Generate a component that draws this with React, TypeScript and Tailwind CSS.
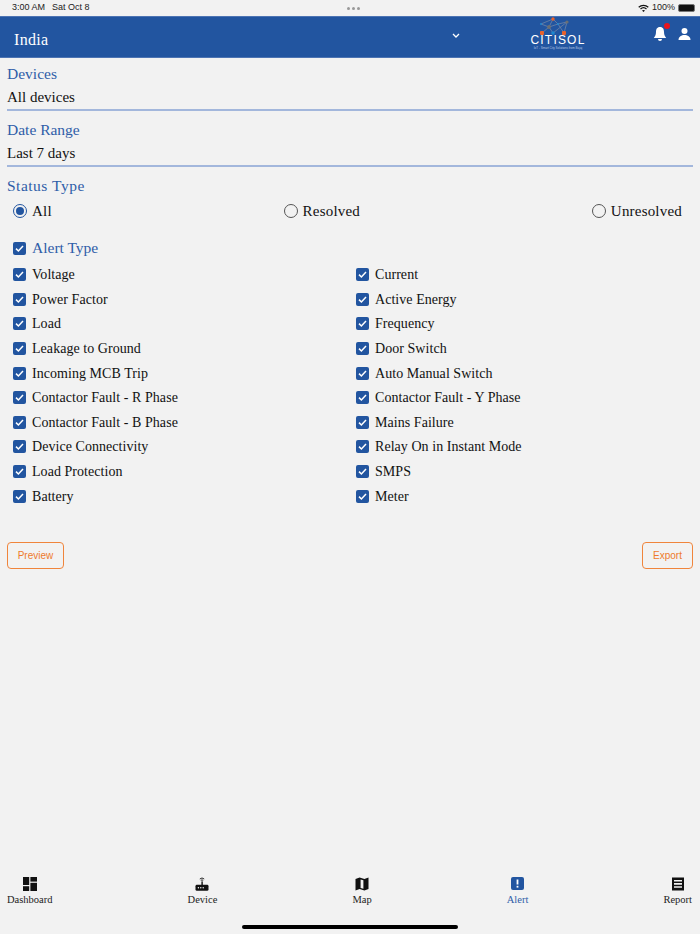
const leftAlerts = ["Voltage", "Power Factor", "Load", "Leakage to Ground", "Incoming MCB Trip", "Contactor Fault - R Phase", "Contactor Fault - B Phase", "Device Connectivity", "Load Protection", "Battery"];
const rightAlerts = ["Current", "Active Energy", "Frequency", "Door Switch", "Auto Manual Switch", "Contactor Fault - Y Phase", "Mains Failure", "Relay On in Instant Mode", "SMPS", "Meter"];

const serif = "font-['Liberation_Serif',serif]";

const Check = () => (
	<span className="w-[13px] h-[13px] rounded-[2px] bg-[#2255a0] flex items-center justify-center shrink-0">
		<svg width="11" height="11" viewBox="0 0 11 11" fill="none">
			<path d="M2 5.6 L4.4 8 L9 3" stroke="#fff" strokeWidth="1.5" />
		</svg>
	</span>
);

const Radio = ({ on, label }: { on?: boolean; label: string }) => (
	<div className="flex items-center gap-[5px]">
		<span className={`w-[14px] h-[14px] rounded-full flex items-center justify-center ${on ? "border-[1.5px] border-[#2255a0]" : "border border-[#555]"}`}>
			{on && <span className="w-[8px] h-[8px] rounded-full bg-[#2255a0]" />}
		</span>
		<span className="text-[15px] text-[#111] tracking-[0.2px]">{label}</span>
	</div>
);

const Field = ({ label, value }: { label: string; value: string }) => (
	<div className="border-b-2 border-[#a3b7dc] h-[56px] pt-[9px]">
		<div className="text-[15.5px] leading-[20px] text-[#2f5da8]">{label}</div>
		<div className="text-[15px] leading-[20px] mt-[3px] text-[#111]">{value}</div>
	</div>
);

const Logo = () => (
	<div className="w-[60px] h-[40px] flex flex-col items-center">
		<svg width="40" height="19" viewBox="0 0 40 19">
			<g stroke="#8a93a8" strokeWidth="0.6" fill="none">
				<path d="M3 7 L15 2 L20 7 L11 10 L3 7" />
				<path d="M15 2 L11 10 L4 16 M11 10 L15 16 L29 5 L26 16 L20 7 L29 5" />
			</g>
			<circle cx="15" cy="2" r="1.7" fill="#e8622c" />
			<circle cx="29" cy="5" r="1.6" fill="#6b6f73" />
			<circle cx="11" cy="10" r="1.9" fill="#6b6f73" />
			<circle cx="3" cy="7" r="1" fill="#1e88d0" />
			<circle cx="20" cy="7" r="1" fill="#1e88d0" />
			<rect x="2" y="14" width="4" height="4" rx="1" fill="#e8622c" />
			<circle cx="15" cy="16" r="1.8" fill="#1e88d0" />
			<rect x="24" y="14" width="4" height="4" rx="1" fill="#e8622c" />
		</svg>
		<div className="font-['Liberation_Sans',sans-serif] text-white text-[12px] leading-[9px] tracking-[1.2px]">CITISOL</div>
		<div className="font-['Liberation_Sans',sans-serif] text-[#b6c6e0] text-[3px] leading-[5px] mt-[0.5px] whitespace-nowrap">IoT - Smart City Solutions from Bajaj</div>
	</div>
);

const Tab = ({ label, active, children }: { label: string; active?: boolean; children: React.ReactNode }) => (
	<div className="flex flex-col items-center">
		<div className="h-[15px] flex items-center justify-center">{children}</div>
		<div className={`text-[10.5px] leading-[12px] mt-[3px] ${active ? "text-[#2f5da8]" : "text-[#222]"}`}>{label}</div>
	</div>
);

export default function App() {
	return (
		<div className={`w-[700px] h-[934px] bg-[#f2f2f2] flex flex-col overflow-hidden ${serif}`}>
			{/* status bar */}
			<div className="h-4 flex items-center justify-between pl-3 pr-[5px] font-['Liberation_Sans',sans-serif] text-[9px] text-[#222]">
				<div className="flex gap-[7px] w-[160px]">
					<span>3:00 AM</span>
					<span>Sat Oct 8</span>
				</div>
				<div className="flex gap-[2px]">
					<span className="w-[3px] h-[3px] rounded-full bg-[#999]" />
					<span className="w-[3px] h-[3px] rounded-full bg-[#999]" />
					<span className="w-[3px] h-[3px] rounded-full bg-[#999]" />
				</div>
				<div className="flex items-center justify-end gap-[3px] w-[160px]">
					<svg width="11" height="9" viewBox="0 0 11 9" fill="none" stroke="#111" strokeWidth="1.2">
						<path d="M0.7 3.2 A7 7 0 0 1 10.3 3.2" />
						<path d="M2.5 5 A4.4 4.4 0 0 1 8.5 5" />
						<path d="M5.5 8 L4 6.6 A2.2 2.2 0 0 1 7 6.6 Z" fill="#111" stroke="none" />
					</svg>
					<span>100%</span>
					<span className="w-[17px] h-[8px] rounded-[2px] bg-[#111] border border-[#777]" />
				</div>
			</div>

			{/* header */}
			<div className="h-[42px] bg-[#2255a0] border-y border-[#8fa3cf]/40 flex items-center pl-[14px] pr-[9px]">
				<div className="text-[16px] text-white tracking-[0.3px] mt-[6px] w-[438px]">India</div>
				<svg width="8" height="6" viewBox="0 0 8 6" fill="none" stroke="#fff" strokeWidth="1.3" className="mt-[-3px]">
					<path d="M1 1 L4 4 L7 1" />
				</svg>
				<div className="ml-[68px]"><Logo /></div>
				<div className="relative ml-[auto] mr-[11px] mt-[-6px]">
					<svg width="14" height="16" viewBox="0 0 14 16" fill="#fff">
						<path d="M7 1 C3.8 1 3 3.6 3 6 C3 9 2 10.5 0.8 12 L13.2 12 C12 10.5 11 9 11 6 C11 3.6 10.2 1 7 1 Z" />
						<path d="M5 13 A2 2 0 0 0 9 13 Z" />
					</svg>
					<span className="absolute -top-[3px] right-[-3px] w-[6px] h-[6px] rounded-full bg-[#e8141c]" />
				</div>
				<svg width="13" height="12" viewBox="0 0 13 12" fill="#fff" className="mt-[-6px]">
					<circle cx="6.5" cy="3" r="3" />
					<path d="M0.5 12 C0.5 8.5 3.5 7 6.5 7 C9.5 7 12.5 8.5 12.5 12 Z" />
				</svg>
			</div>

			{/* form */}
			<div className="px-[7px] -mt-[3px]">
				<Field label="Devices" value="All devices" />
				<Field label="Date Range" value="Last 7 days" />
				<div className="text-[15.5px] leading-[20px] mt-[9px] text-[#2f5da8] tracking-[0.5px]">Status Type</div>
				<div className="flex justify-between pl-[6px] pr-[11px] mt-[5px] h-[20px] items-center">
					<Radio on label="All" />
					<Radio label="Resolved" />
					<Radio label="Unresolved" />
				</div>
			</div>

			<div className="pl-[13px] mt-[17px]">
				<div className="flex items-center gap-[6px] h-[20px]">
					<Check />
					<span className="text-[15.5px] text-[#2f5da8]">Alert Type</span>
				</div>
				<div className="grid grid-cols-[343px_1fr] auto-rows-[24.6px] mt-[4.4px] text-[14px] text-[#111] tracking-[0.05px]">
					{leftAlerts.map((name, i) => (
						<div key={name} className="contents">
							<div className="flex items-center gap-[6px]">
								<Check />
								<span>{name}</span>
							</div>
							<div className="flex items-center gap-[6px]">
								<Check />
								<span>{rightAlerts[i]}</span>
							</div>
						</div>
					))}
				</div>
			</div>

			<div className="flex justify-between px-[7px] mt-[33.6px] font-['Liberation_Sans',sans-serif] text-[10px] text-[#ee7a2c]">
				<button className="w-[57px] h-[27px] border border-[#f0853c] rounded-[4px]">Preview</button>
				<button className="w-[51px] h-[27px] border border-[#f0853c] rounded-[4px]">Export</button>
			</div>

			{/* tab bar */}
			<div className="mt-auto flex justify-between pl-[7px] pr-[8px] h-[65px] pt-[7px] relative">
				<Tab label="Dashboard">
					<svg width="14" height="14" viewBox="0 0 14 14" fill="#111">
						<rect x="0" y="0" width="6.2" height="8" />
						<rect x="7.4" y="0" width="6.6" height="4.6" />
						<rect x="0" y="9.2" width="6.2" height="4.8" />
						<rect x="7.4" y="5.8" width="6.6" height="8.2" />
					</svg>
				</Tab>
				<Tab label="Device">
					<svg width="14" height="14" viewBox="0 0 14 14" fill="#111">
						<path d="M4.8 2 A3.2 3.2 0 0 1 9.2 2" fill="none" stroke="#111" strokeWidth="0.9" />
						<path d="M5.8 3.4 A1.8 1.8 0 0 1 8.2 3.4" fill="none" stroke="#111" strokeWidth="0.9" />
						<rect x="6.4" y="4.4" width="1.4" height="4" />
						<rect x="0.5" y="7.8" width="13" height="6" rx="1.4" />
						<circle cx="3.4" cy="10.8" r="0.7" fill="#fff" />
						<circle cx="5.8" cy="10.8" r="0.7" fill="#fff" />
						<circle cx="8.2" cy="10.8" r="0.7" fill="#fff" />
					</svg>
				</Tab>
				<Tab label="Map">
					<svg width="14" height="14" viewBox="0 0 14 14" fill="#111" fillRule="evenodd">
						<path d="M0.5 2 L4.6 0.6 L9.4 2 L13.5 0.6 L13.5 12 L9.4 13.4 L4.6 12 L0.5 13.4 Z M5.6 2.4 L5.6 11 L8.4 11.8 L8.4 3.2 Z" />
					</svg>
				</Tab>
				<Tab label="Alert" active>
					<span className="w-[13px] h-[13px] rounded-[2px] bg-[#2255a0] flex items-center justify-center">
						<svg width="3" height="9" viewBox="0 0 3 9" fill="#fff">
							<rect x="0.6" y="0.5" width="1.8" height="5" />
							<rect x="0.6" y="6.8" width="1.8" height="1.8" />
						</svg>
					</span>
				</Tab>
				<Tab label="Report">
					<svg width="14" height="14" viewBox="0 0 14 14" fill="#111" fillRule="evenodd">
						<path d="M1 0.5 L13 0.5 L13 13.5 L1 13.5 Z M3 3 L3 4.6 L11 4.6 L11 3 Z M3 6 L3 7.8 L11 7.8 L11 6 Z M3 9.2 L3 10.8 L11 10.8 L11 9.2 Z" />
					</svg>
				</Tab>
				<div className="absolute bottom-[5px] left-[242px] w-[216px] h-[4px] rounded-full bg-black" />
			</div>
		</div>
	);
}
